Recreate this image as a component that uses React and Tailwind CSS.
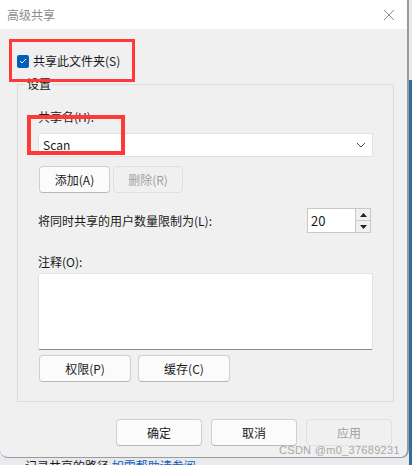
import React from "react";

const font = { fontFamily: '"Noto Sans CJK SC", "Noto Sans", sans-serif' };

const Btn = ({ children, disabled, className = "" }) => (
  <button
    disabled={disabled}
    className={`h-[27px] rounded-[4px] border text-[12px] leading-none ${
      disabled
        ? "border-[#e0e0e0] bg-[#f0f0f0] text-[#a0a0a0]"
        : "border-[#cfcfcf] border-b-[#b8b8b8] bg-[#fbfbfb] text-[#1a1a1a]"
    } ${className}`}
  >
    {children}
  </button>
);

export default function App() {
  return (
    <div className="relative w-[412px] h-[465px] overflow-hidden bg-[#e8eaee]" style={font}>
      {/* background strip at right */}
      <div className="absolute right-0 top-[80px] w-[3px] h-[385px] bg-[#2f6da3]" />

      <div className="relative w-[409px] h-[458px] flex flex-col bg-[#f0f0f0] rounded-b-[8px] border-r-2 border-b border-[#9a9a9a] overflow-hidden">
        {/* title bar */}
        <div className="h-[29px] bg-white flex items-center justify-between pl-[7px] pr-[12px]">
          <span className="text-[12px] text-[#8c8c8c]">高级共享</span>
          <svg width="12" height="12" viewBox="0 0 12 12" className="mt-[1px]">
            <path d="M1 1 L11 11 M11 1 L1 11" stroke="#8a8a8a" strokeWidth="1" />
          </svg>
        </div>

        {/* checkbox row */}
        <div className="flex items-center gap-[4px] pl-[17px] mt-[25px] h-[14px]">
          <span className="w-[12px] h-[13px] rounded-[2px] bg-[#005fb8] flex items-center justify-center">
            <svg width="8" height="8" viewBox="0 0 8 8">
              <path d="M1 4.2 L3 6 L7 2" stroke="white" strokeWidth="1" fill="none" />
            </svg>
          </span>
          <span className="text-[12px] text-[#1a1a1a]">共享此文件夹(S)</span>
        </div>

        {/* settings group */}
        <fieldset className="ml-[17px] mt-[9px] w-[375px] h-[325px] border border-[#dcdcdc] px-[20px]">
          <legend className="-ml-[12px] px-[1px] text-[12px] text-[#1a1a1a] leading-[14px]">设置</legend>

          <div className="text-[12px] text-[#1a1a1a] mt-[19px] leading-[14px]">共享名(H):</div>
          <div className="mt-[9px] h-[24px] w-[335px] bg-white border border-[#e2e2e2] flex items-center justify-between pl-[4px] pr-[6px]">
            <span className="text-[12px] text-[#1a1a1a]">Scan</span>
            <svg width="10" height="6" viewBox="0 0 10 6">
              <path d="M1 1 L5 5 L9 1" stroke="#555" strokeWidth="1" fill="none" />
            </svg>
          </div>

          <div className="flex gap-[3px] mt-[9px] ml-[1px]">
            <Btn className="w-[71px]">添加(A)</Btn>
            <Btn disabled className="w-[70px]">删除(R)</Btn>
          </div>

          <div className="flex items-center justify-between mt-[15px] w-[333px]">
            <span className="text-[12px] text-[#1a1a1a]">将同时共享的用户数量限制为(L):</span>
            <div className="flex h-[25px] border border-[#c8c8c8]">
              <div className="w-[47px] bg-white flex items-center pl-[3px] text-[13px] text-[#1a1a1a]">20</div>
              <div className="w-[15px] flex flex-col border-l border-[#c8c8c8]">
                <div className="flex-1 flex items-center justify-center border-b border-[#c8c8c8]">
                  <svg width="7" height="4" viewBox="0 0 7 4"><path d="M0 4 L3.5 0 L7 4 Z" fill="#222" /></svg>
                </div>
                <div className="flex-1 flex items-center justify-center">
                  <svg width="7" height="4" viewBox="0 0 7 4"><path d="M0 0 L3.5 4 L7 0 Z" fill="#222" /></svg>
                </div>
              </div>
            </div>
          </div>

          <div className="text-[12px] text-[#1a1a1a] mt-[22px] leading-[14px]">注释(O):</div>
          <div className="mt-[4px] h-[77px] w-[335px] bg-white border border-[#e2e2e2] border-b-[#8a8a8a] rounded-[2px]" />

          <div className="flex gap-[7px] mt-[5px] ml-[1px]">
            <Btn className="w-[92px]">权限(P)</Btn>
            <Btn className="w-[92px]">缓存(C)</Btn>
          </div>
        </fieldset>

        {/* bottom buttons */}
        <div className="flex gap-[9px] ml-[116px] mt-[17px]">
          <Btn className="w-[86px]">确定</Btn>
          <Btn className="w-[86px]">取消</Btn>
          <Btn disabled className="w-[86px]">应用</Btn>
        </div>

        <div className="absolute left-[279px] top-[442px] text-[11px] text-[#a8a8a8] tracking-[0.3px]" style={{ fontFamily: '"Liberation Sans", sans-serif' }}>
          CSDN @m0_37689231
        </div>

        {/* annotation boxes */}
        <div className="absolute left-[9px] top-[39px] w-[126px] h-[43px] border-[3px] border-[#ff3838]" />
        <div className="absolute left-[27px] top-[115px] w-[98px] h-[40px] border-[4px] border-[#ff3838]" />
      </div>

      {/* partially visible text behind */}
      <div className="absolute left-[25px] top-[459px] text-[12px] text-[#1a1a1a] leading-[14px]">
        记录共享的路径 <span className="text-[#1060c0]">如需帮助请参阅</span>
      </div>
    </div>
  );
}
